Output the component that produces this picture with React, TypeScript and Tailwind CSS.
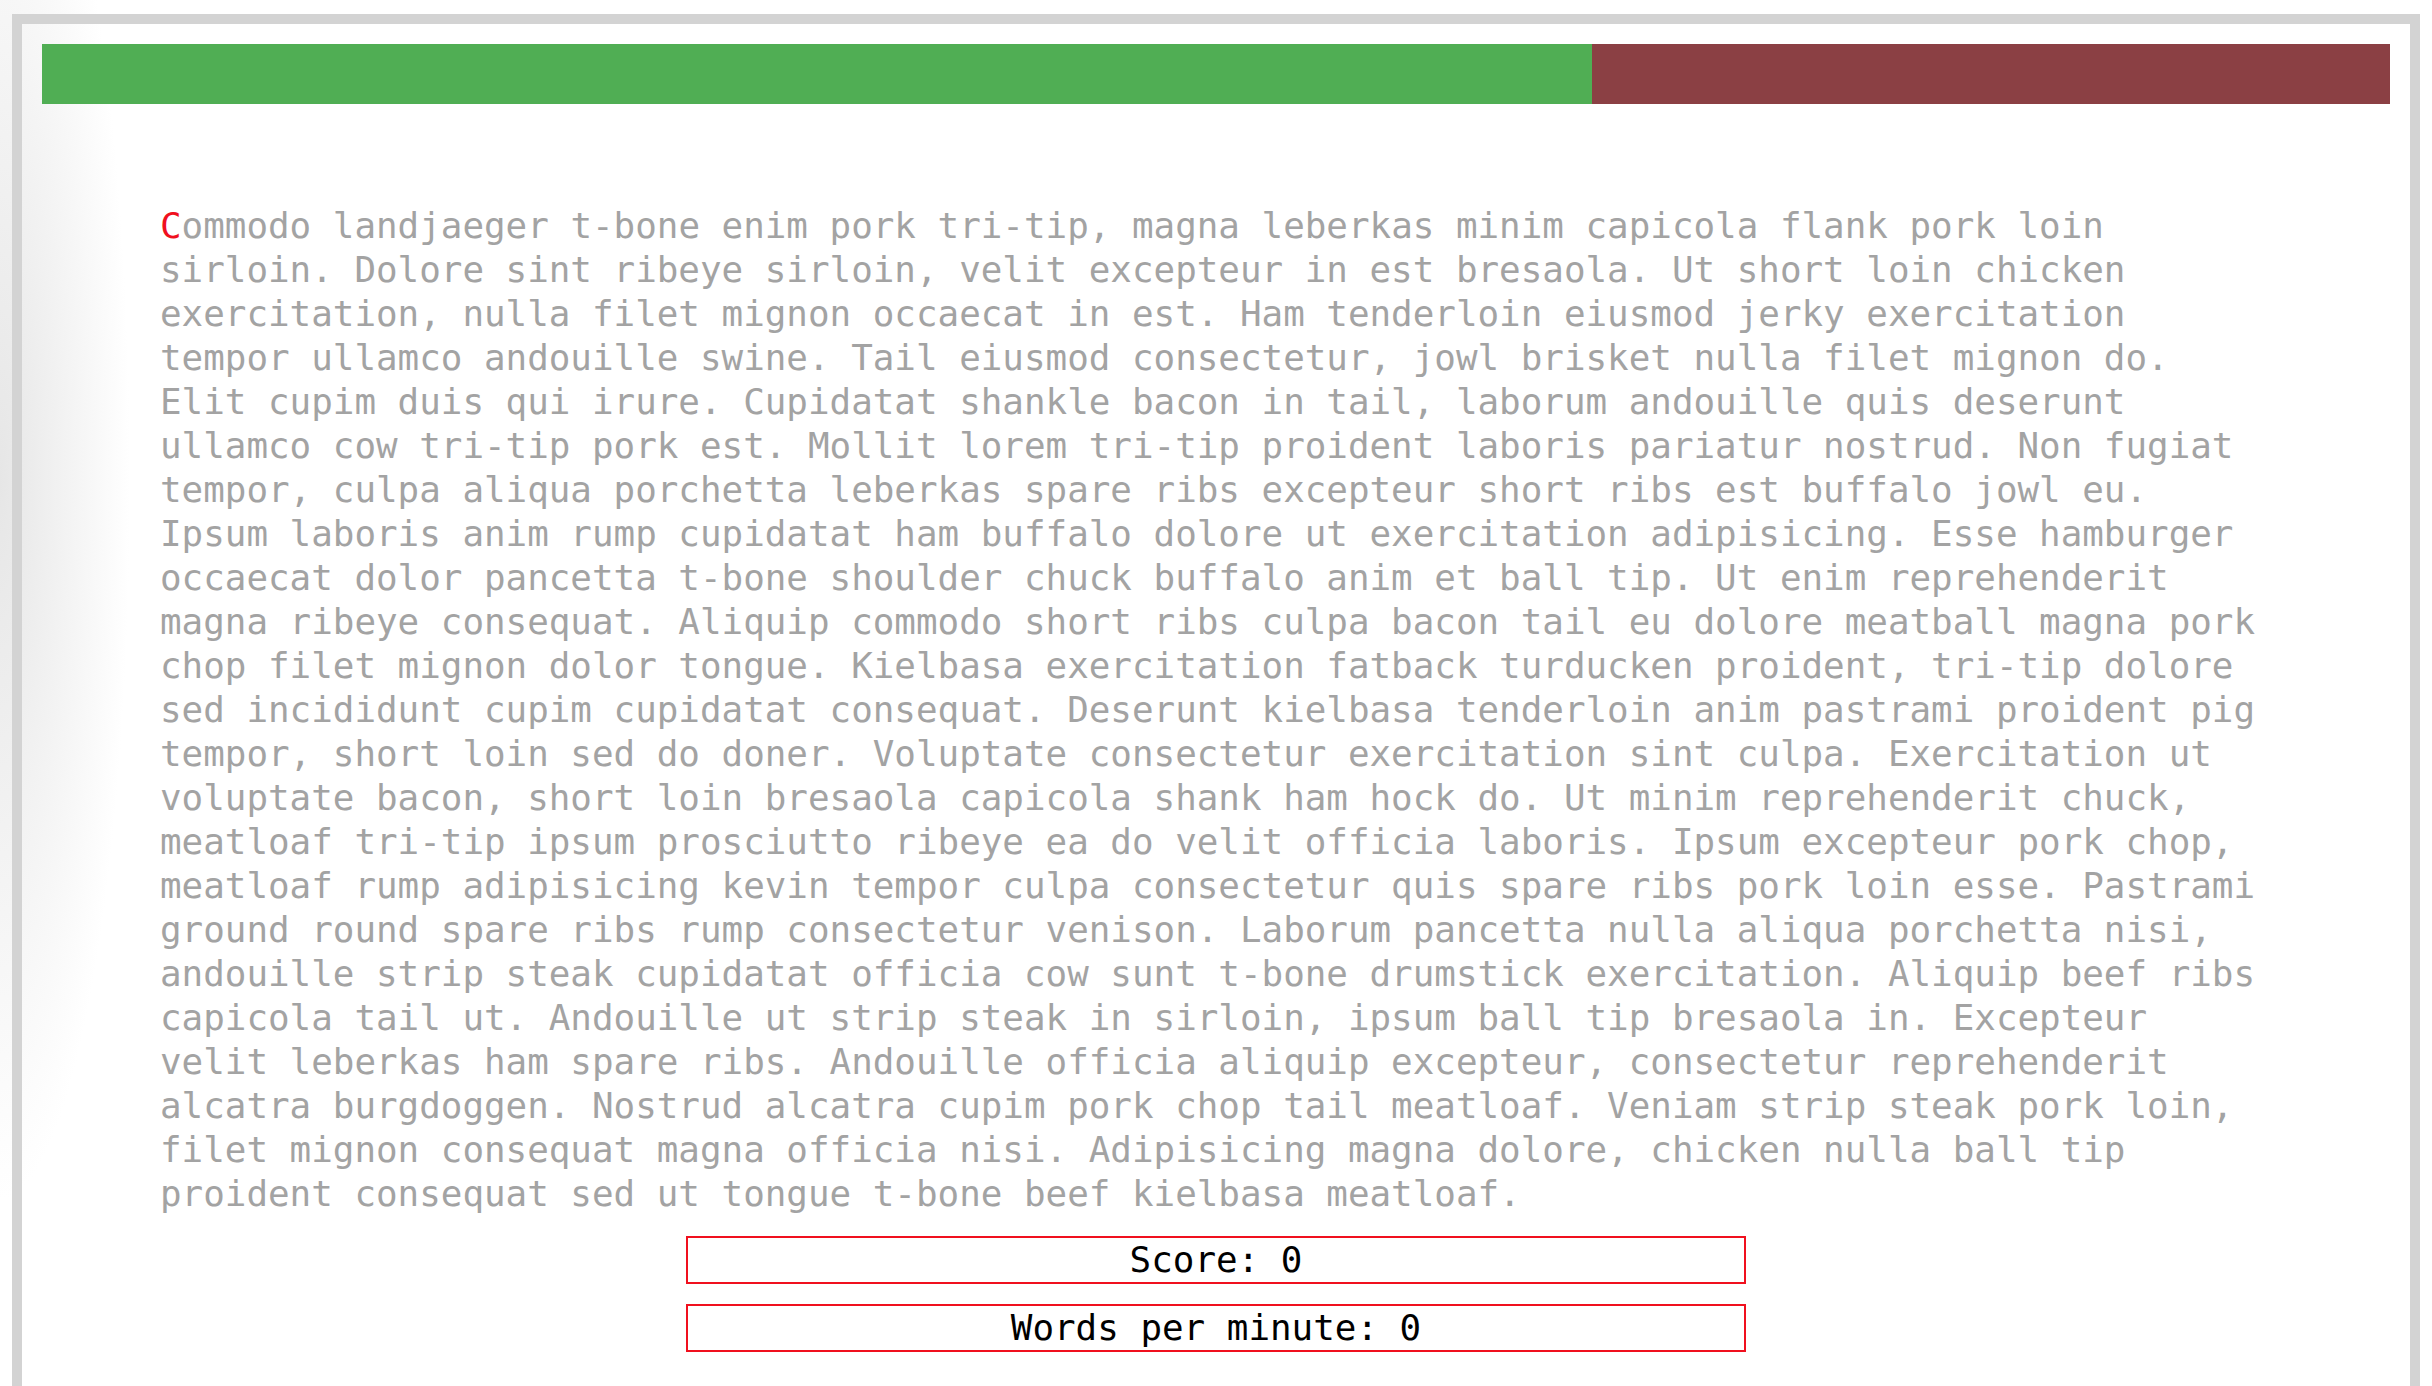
import React from "react";

const TEXT =
  "ommodo landjaeger t-bone enim pork tri-tip, magna leberkas minim capicola flank pork loin sirloin. Dolore sint ribeye sirloin, velit excepteur in est bresaola. Ut short loin chicken exercitation, nulla filet mignon occaecat in est. Ham tenderloin eiusmod jerky exercitation tempor ullamco andouille swine. Tail eiusmod consectetur, jowl brisket nulla filet mignon do. Elit cupim duis qui irure. Cupidatat shankle bacon in tail, laborum andouille quis deserunt ullamco cow tri-tip pork est. Mollit lorem tri-tip proident laboris pariatur nostrud. Non fugiat tempor, culpa aliqua porchetta leberkas spare ribs excepteur short ribs est buffalo jowl eu. Ipsum laboris anim rump cupidatat ham buffalo dolore ut exercitation adipisicing. Esse hamburger occaecat dolor pancetta t-bone shoulder chuck buffalo anim et ball tip. Ut enim reprehenderit magna ribeye consequat. Aliquip commodo short ribs culpa bacon tail eu dolore meatball magna pork chop filet mignon dolor tongue. Kielbasa exercitation fatback turducken proident, tri-tip dolore sed incididunt cupim cupidatat consequat. Deserunt kielbasa tenderloin anim pastrami proident pig tempor, short loin sed do doner. Voluptate consectetur exercitation sint culpa. Exercitation ut voluptate bacon, short loin bresaola capicola shank ham hock do. Ut minim reprehenderit chuck, meatloaf tri-tip ipsum prosciutto ribeye ea do velit officia laboris. Ipsum excepteur pork chop, meatloaf rump adipisicing kevin tempor culpa consectetur quis spare ribs pork loin esse. Pastrami ground round spare ribs rump consectetur venison. Laborum pancetta nulla aliqua porchetta nisi, andouille strip steak cupidatat officia cow sunt t-bone drumstick exercitation. Aliquip beef ribs capicola tail ut. Andouille ut strip steak in sirloin, ipsum ball tip bresaola in. Excepteur velit leberkas ham spare ribs. Andouille officia aliquip excepteur, consectetur reprehenderit alcatra burgdoggen. Nostrud alcatra cupim pork chop tail meatloaf. Veniam strip steak pork loin, filet mignon consequat magna officia nisi. Adipisicing magna dolore, chicken nulla ball tip proident consequat sed ut tongue t-bone beef kielbasa meatloaf.";

export default function App() {
  return (
    <div className="h-screen overflow-hidden bg-[radial-gradient(ellipse_130px_720px_at_0px_480px,#e6e6e6,#ffffff)] px-[12px] pt-[14px] font-['DejaVu_Sans_Mono',monospace]">
      <div className="h-[1400px] border-[10px] border-b-0 border-[#d3d3d3] p-[20px]">
        <div className="flex h-[60px] w-full">
          <div className="h-full w-[66%] bg-[#50ae54]" />
          <div className="h-full flex-1 bg-[#8b4044]" />
        </div>
        <p className="ml-[118px] mr-[130px] mt-[100px] text-[35.88px] leading-[44px] text-[#a3a3a3]">
          <span className="text-[#f0101e]">C</span>
          {TEXT}
        </p>
        <div className="mx-auto mt-[20px] flex w-[1060px] flex-col gap-[20px]">
          <div className="border-2 border-[#f0101e] text-center text-[35.88px] leading-[44px] text-black">
            Score: 0
          </div>
          <div className="border-2 border-[#f0101e] text-center text-[35.88px] leading-[44px] text-black">
            Words per minute: 0
          </div>
        </div>
      </div>
    </div>
  );
}
